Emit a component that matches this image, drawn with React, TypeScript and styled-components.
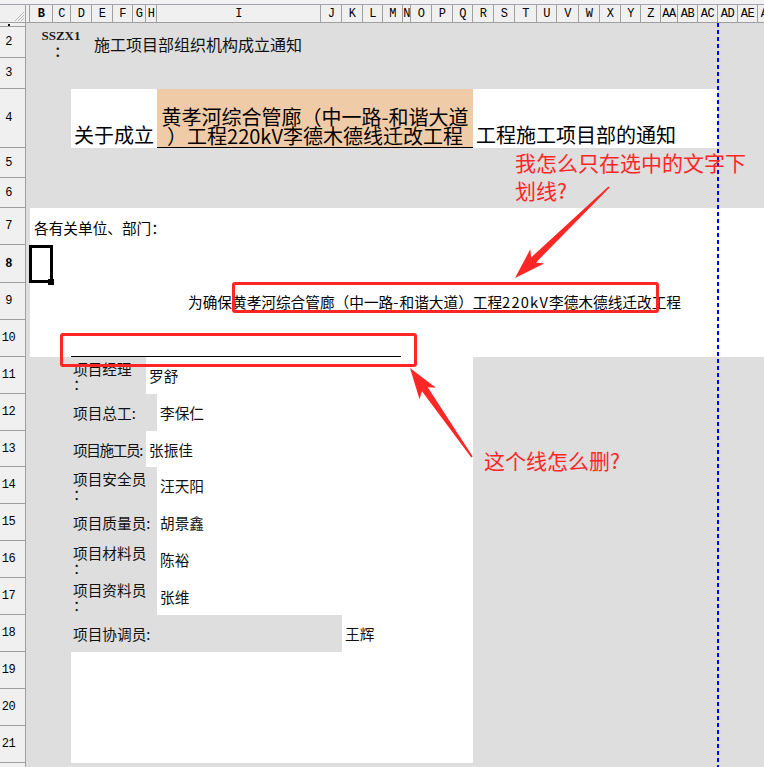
import React from "react";
import styled, { createGlobalStyle, css } from "styled-components";

const GlobalStyle = createGlobalStyle`
  html, body {
    margin: 0;
    padding: 0;
    background: #dedede;
  }
  body {
    font-family: "Noto Sans CJK SC", "Noto Sans", sans-serif;
    overflow: hidden;
  }
`;

const GRID = "#9f9f9f";
const SHEET = "#dedede";
const RED = "#ff2626";

// column name + pixel width, as the sheet shows them
const COLS: [string, number][] = [
  ["A", 4], ["B", 23], ["C", 18], ["D", 21], ["E", 21], ["F", 20], ["G", 13], ["H", 11],
  ["I", 164], ["J", 21], ["K", 21], ["L", 20], ["M", 20], ["N", 8], ["O", 21], ["P", 21],
  ["Q", 20], ["R", 21], ["S", 21], ["T", 22], ["U", 20], ["V", 22], ["W", 21], ["X", 21],
  ["Y", 20], ["Z", 20], ["AA", 17], ["AB", 20], ["AC", 20], ["AD", 20], ["AE", 20], ["AF", 20],
];

const idx = (c: string) => COLS.findIndex(([n]) => n === c);
const span = (from: string, to: string) =>
  COLS.slice(idx(from), idx(to) + 1).reduce((s, [, w]) => s + w, 0);

type Fill = "gray" | "white" | "peach";
const fills: Record<Fill, string> = { gray: SHEET, white: "#ffffff", peach: "#f0cba8" };

const Page = styled.div`
  position: relative;
  width: 764px;
  height: 767px;
  overflow: hidden;
  background: ${SHEET};
`;

const TopStrip = styled.div`
  height: 5px;
  box-sizing: border-box;
  background: #f2f2f2;
  border-bottom: 1px solid #a3a3b0;
`;

const HeaderRow = styled.div`
  display: flex;
  height: 18px;
  box-sizing: border-box;
  border-bottom: 1px solid ${GRID};
  background: #f0f0f0;
  white-space: nowrap;
`;

const Corner = styled.div`
  flex: 0 0 26px;
  box-sizing: border-box;
  border-right: 1px solid ${GRID};
  display: flex;
  align-items: flex-end;
  justify-content: flex-end;
`;

const ColHead = styled.div<{ $w: number; $bold?: boolean }>`
  flex: 0 0 ${(p) => p.$w}px;
  box-sizing: border-box;
  border-right: 1px solid ${GRID};
  overflow: hidden;
  display: flex;
  align-items: center;
  justify-content: center;
  font-family: "Liberation Mono", "DejaVu Sans Mono", monospace;
  font-size: 12px;
  font-weight: ${(p) => (p.$bold ? 700 : 400)};
  color: #000;
  letter-spacing: -0.5px;
`;

const SheetRow = styled.div<{ $h: number }>`
  display: flex;
  height: ${(p) => p.$h}px;
  background: ${SHEET};
`;

const RowHead = styled.div<{ $bold?: boolean }>`
  flex: 0 0 26px;
  box-sizing: border-box;
  padding-right: 8px;
  border-right: 1px solid ${GRID};
  border-bottom: 1px solid ${GRID};
  background: #f0f0f0;
  display: flex;
  align-items: center;
  justify-content: center;
  overflow: hidden;
  font-family: "Liberation Mono", "DejaVu Sans Mono", monospace;
  font-size: 12px;
  font-weight: ${(p) => (p.$bold ? 700 : 400)};
  color: #000;
  letter-spacing: -0.5px;
`;

const Dot = styled.span`
  width: 2px;
  height: 2px;
  background: #000;
`;

const Cell = styled.div<{
  $w?: number;
  $fill?: Fill;
  $x?: "start" | "center";
  $y?: "start" | "center" | "end";
  $pl?: number;
  $pt?: number;
  $pb?: number;
  $underline?: boolean;
}>`
  position: relative;
  box-sizing: border-box;
  ${(p) =>
    p.$w !== undefined
      ? css`
          flex: 0 0 ${p.$w}px;
        `
      : css`
          flex: 1 1 auto;
        `}
  display: flex;
  justify-content: ${(p) => (p.$x === "center" ? "center" : "flex-start")};
  align-items: ${(p) =>
    p.$y === "start" ? "flex-start" : p.$y === "end" ? "flex-end" : "center"};
  padding-left: ${(p) => p.$pl ?? 0}px;
  padding-top: ${(p) => p.$pt ?? 0}px;
  padding-bottom: ${(p) => p.$pb ?? 0}px;
  background: ${(p) => fills[p.$fill ?? "gray"]};
  ${(p) =>
    p.$underline &&
    css`
      border-bottom: 1px solid #000;
    `}
  white-space: nowrap;
  color: #000;
`;

const Selection = styled.div`
  position: absolute;
  left: -1px;
  top: 0;
  right: 0;
  bottom: 0;
  border: 3px solid #000;
  z-index: 3;
  &::after {
    content: "";
    position: absolute;
    right: -4px;
    bottom: -5px;
    width: 6px;
    height: 6px;
    background: #000;
  }
`;

const Code = styled.div`
  font-family: "Liberation Serif", "Noto Sans CJK SC", serif;
  font-weight: 700;
  font-size: 13px;
  line-height: 16px;
  text-align: center;
  color: #1a1a1a;
`;

const Title = styled.span`
  font-size: 16px;
  line-height: 20px;
  color: #111;
`;

const Big = styled.div<{ $center?: boolean }>`
  font-size: 20px;
  line-height: 20px;
  text-align: ${(p) => (p.$center ? "center" : "left")};
`;

const BigLine = styled.div`
  line-height: 21px;
  height: 19px;
`;

const Plain = styled.span`
  font-size: 14.67px;
  line-height: 18px;
`;

// SimSun draws latin half-width; widen it a little so the line keeps its length
const Half = styled.span`
  letter-spacing: 1.2px;
`;

const Label = styled.div<{ $tight?: boolean }>`
  font-size: 14.67px;
  line-height: 15px;
  white-space: pre-line;
  letter-spacing: ${(p) => (p.$tight ? "-1.4px" : "0")};
  color: #111;
`;

const Note = styled.div<{ $x: number; $y: number }>`
  position: absolute;
  left: ${(p) => p.$x}px;
  top: ${(p) => p.$y}px;
  font-size: 21px;
  line-height: 28px;
  color: ${RED};
  white-space: pre-line;
  z-index: 5;
`;

const Box = styled.div<{ $x: number; $y: number; $w: number; $h: number }>`
  position: absolute;
  left: ${(p) => p.$x}px;
  top: ${(p) => p.$y}px;
  width: ${(p) => p.$w}px;
  height: ${(p) => p.$h}px;
  box-sizing: border-box;
  border: 3px solid ${RED};
  border-radius: 3px;
  z-index: 5;
`;

const PageBreak = styled.div`
  position: absolute;
  left: 717px;
  top: 23px;
  bottom: 0;
  width: 2px;
  background: repeating-linear-gradient(to bottom, #0000ff 0 4px, transparent 4px 7px);
  z-index: 4;
`;

const Overlay = styled.svg`
  position: absolute;
  left: 0;
  top: 0;
  z-index: 6;
  pointer-events: none;
`;

function arrow(x1: number, y1: number, x2: number, y2: number) {
  const head = 26;
  const hw = 10;
  const sw = 3.5;
  const tw = 0.8;
  const dx = x2 - x1;
  const dy = y2 - y1;
  const L = Math.hypot(dx, dy);
  const ux = dx / L;
  const uy = dy / L;
  const nx = -uy;
  const ny = ux;
  const bx = x2 - ux * head;
  const by = y2 - uy * head;
  const cx = bx - ux * 5;
  const cy = by - uy * 5;
  const pts = [
    [x1 + nx * tw, y1 + ny * tw],
    [bx + nx * sw, by + ny * sw],
    [cx + nx * hw, cy + ny * hw],
    [x2, y2],
    [cx - nx * hw, cy - ny * hw],
    [bx - nx * sw, by - ny * sw],
    [x1 - nx * tw, y1 - ny * tw],
  ];
  return pts.map(([a, b]) => `${a.toFixed(1)},${b.toFixed(1)}`).join(" ");
}

type Staff = { n: number; h: number; label: string; to: string; value: string; tight?: boolean };

const staff: Staff[] = [
  { n: 11, h: 37, label: "项目经理\n：", to: "G", value: "罗舒" },
  { n: 12, h: 37, label: "项目总工:", to: "H", value: "李保仁" },
  { n: 13, h: 36, label: "项目施工员:", to: "G", value: "张振佳", tight: true },
  { n: 14, h: 37, label: "项目安全员\n：", to: "H", value: "汪天阳" },
  { n: 15, h: 37, label: "项目质量员:", to: "H", value: "胡景鑫" },
  { n: 16, h: 37, label: "项目材料员\n：", to: "H", value: "陈裕" },
  { n: 17, h: 37, label: "项目资料员\n：", to: "H", value: "张维" },
  { n: 18, h: 37, label: "项目协调员:", to: "J", value: "王辉" },
];

const next = (c: string) => COLS[idx(c) + 1][0];

export default function App() {
  return (
    <Page>
      <GlobalStyle />
      <TopStrip />
      <HeaderRow>
        <Corner>
          <svg width="12" height="12" viewBox="0 0 12 12">
            <path d="M11 2 L2 11 M11 5 L5 11 M11 8 L8 11" stroke="#b5b5b5" strokeWidth="1" />
          </svg>
        </Corner>
        {COLS.map(([name, w]) => (
          <ColHead key={name} $w={w} $bold={name === "B"}>
            {name === "A" ? "" : name}
          </ColHead>
        ))}
      </HeaderRow>

      <SheetRow $h={4}>
        <RowHead>
          <Dot />
        </RowHead>
      </SheetRow>

      <SheetRow $h={31}>
        <RowHead>2</RowHead>
        <Cell $w={span("A", "A")} />
        <Cell $w={span("B", "D")} $x="center" $y="start" $pt={1}>
          <Code>
            SSZX1
            <br />：
          </Code>
        </Cell>
        <Cell $pl={2} $pt={3}>
          <Title>施工项目部组织机构成立通知</Title>
        </Cell>
      </SheetRow>

      <SheetRow $h={31}>
        <RowHead>3</RowHead>
        <Cell />
      </SheetRow>

      <SheetRow $h={59}>
        <RowHead>4</RowHead>
        <Cell $w={span("A", "C")} />
        <Cell $w={span("D", "H")} $fill="white" $y="end" $pl={3} $pb={3}>
          <Big>关于成立</Big>
        </Cell>
        <Cell $w={span("I", "Q")} $fill="peach" $x="center" $y="end" $pb={3} $underline>
          <Big $center>
            <BigLine>黄孝河综合管廊（中一路-和谐大道</BigLine>
            <BigLine>）工程220kV李德木德线迁改工程</BigLine>
          </Big>
        </Cell>
        <Cell $w={span("R", "AC")} $fill="white" $y="end" $pl={3} $pb={3}>
          <Big>工程施工项目部的通知</Big>
        </Cell>
        <Cell />
      </SheetRow>

      <SheetRow $h={30}>
        <RowHead>5</RowHead>
        <Cell />
      </SheetRow>
      <SheetRow $h={30}>
        <RowHead>6</RowHead>
        <Cell />
      </SheetRow>

      <SheetRow $h={37}>
        <RowHead>7</RowHead>
        <Cell $w={span("A", "A")} />
        <Cell $fill="white" $pl={4} $pt={3}>
          <Plain>各有关单位、部门：</Plain>
        </Cell>
      </SheetRow>

      <SheetRow $h={38}>
        <RowHead $bold>8</RowHead>
        <Cell $w={span("A", "A")} />
        <Cell $w={span("B", "B")} $fill="white">
          <Selection />
        </Cell>
        <Cell $fill="white" />
      </SheetRow>

      <SheetRow $h={37}>
        <RowHead>9</RowHead>
        <Cell $w={span("A", "A")} />
        <Cell $fill="white" $pl={158}>
          <Plain>
            为确保黄孝河综合管廊（中一路<Half>-</Half>和谐大道）工程<Half>220kV</Half>
            李德木德线迁改工程
          </Plain>
        </Cell>
      </SheetRow>

      <SheetRow $h={37}>
        <RowHead>10</RowHead>
        <Cell $w={span("A", "A")} />
        <Cell $w={span("B", "C")} $fill="white" />
        <Cell $w={span("D", "M") - 2} $fill="white" $underline />
        <Cell $fill="white" />
      </SheetRow>

      {staff.map((s) => (
        <SheetRow key={s.n} $h={s.h}>
          <RowHead>{s.n}</RowHead>
          <Cell $w={span("A", "C")} />
          <Cell $w={span("D", s.to)} $pl={2}>
            <Label $tight={s.tight}>{s.label}</Label>
          </Cell>
          <Cell $w={span(next(s.to), "Q")} $fill="white" $pl={3}>
            <Label>{s.value}</Label>
          </Cell>
          <Cell />
        </SheetRow>
      ))}

      {[19, 20, 21].map((n) => (
        <SheetRow key={n} $h={37}>
          <RowHead>{n}</RowHead>
          <Cell $w={span("A", "C")} />
          <Cell $w={span("D", "Q")} $fill="white" />
          <Cell />
        </SheetRow>
      ))}
      <SheetRow $h={37}>
        <RowHead>22</RowHead>
        <Cell />
      </SheetRow>

      <PageBreak />

      <Box $x={232} $y={282} $w={427} $h={31} />
      <Box $x={60} $y={333} $w={357} $h={34} />

      <Note $x={515} $y={148}>{"我怎么只在选中的文字下\n划线?"}</Note>
      <Note $x={484} $y={446}>这个线怎么删?</Note>

      <Overlay width={764} height={767}>
        <polygon points={arrow(609, 187, 515, 278)} fill={RED} />
        <polygon points={arrow(472, 457, 410, 368)} fill={RED} />
      </Overlay>
    </Page>
  );
}
